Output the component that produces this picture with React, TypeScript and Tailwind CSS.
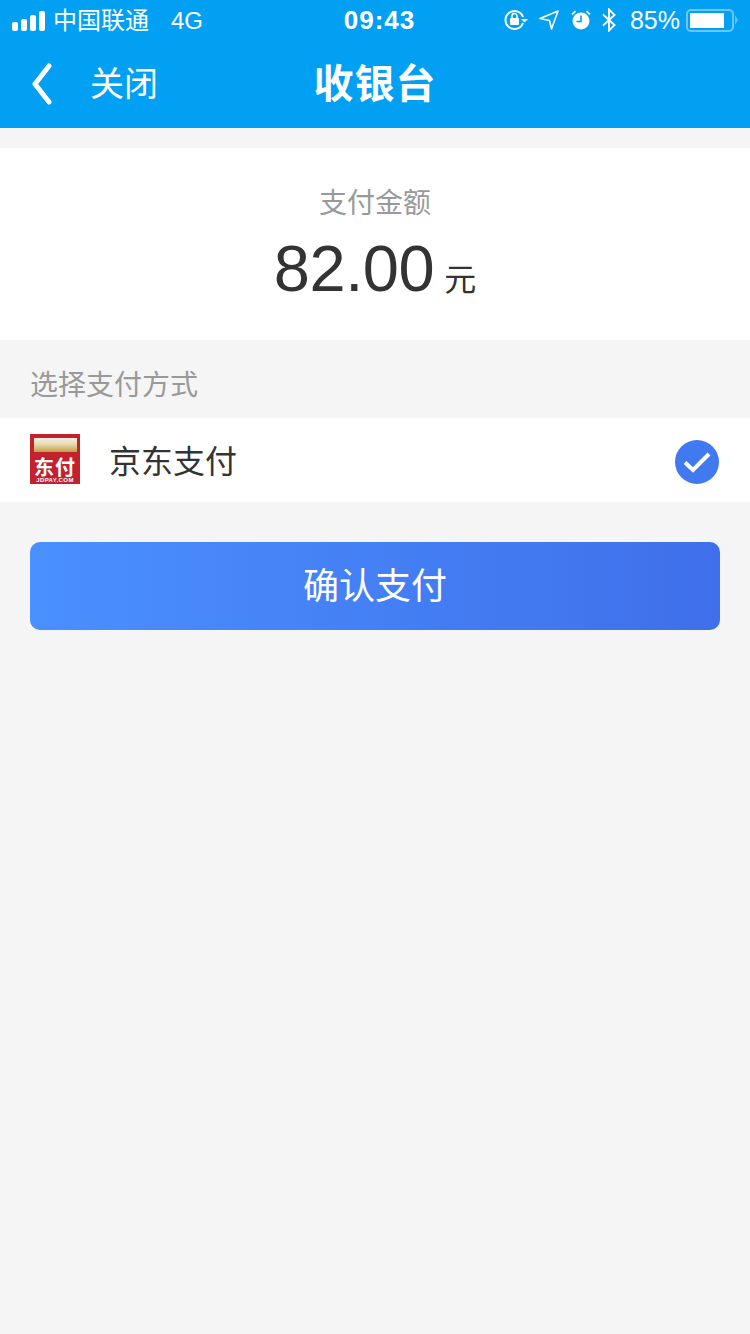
import React from "react";

const cjk = { fontFamily: '"Liberation Sans", "Noto Sans CJK SC", sans-serif' };

function StatusBar() {
  return (
    <div className="flex h-10 items-center justify-between pl-3 pr-[12px] text-white">
      <div className="flex w-[243px] items-center">
        <div className="flex items-end gap-[3px] pt-[1px]">
          <span className="h-[9px] w-[6px] rounded-[2px] bg-white" />
          <span className="h-3 w-[6px] rounded-[2px] bg-white" />
          <span className="h-4 w-[6px] rounded-[2px] bg-white" />
          <span className="h-5 w-[6px] rounded-[2px] bg-white" />
        </div>
        <span className="ml-2 mt-[1px] text-[24px] leading-none">中国联通</span>
        <span className="ml-[22px] mt-[1px] text-[24px] leading-none">4G</span>
      </div>
      <span className="text-[26px] font-bold leading-none tracking-[1px]">09:43</span>
      <div className="flex items-center">
        <svg width="24" height="22" viewBox="0 0 24 22" fill="none">
          <path d="M19 14a9 9 0 1 1 0-6" stroke="white" strokeWidth="2" />
          <path d="M17 10h7l-3.500 3.500z" fill="white" />
          <rect x="6" y="9" width="9" height="7" rx="1" fill="white" />
          <path d="M8 9V7a2.500 2.500 0 0 1 5 0v2" stroke="white" strokeWidth="1.500" />
        </svg>
        <svg className="ml-[11px]" width="20" height="20" viewBox="0 0 20 20" fill="none">
          <path d="M1 8.500 19 1l-6.500 18-2-8.500z" stroke="white" strokeWidth="1.600" strokeLinejoin="round" />
        </svg>
        <svg className="ml-[12px]" width="20" height="20" viewBox="0 0 20 20">
          <circle cx="10" cy="11" r="8.500" fill="white" />
          <path d="M10 5.500V11.500H5.500" stroke="#02a0f3" strokeWidth="1.600" fill="none" />
          <path d="M1 4.500 4.500 1.200M19 4.500 15.500 1.200" stroke="white" strokeWidth="1.800" />
        </svg>
        <svg className="ml-[11px]" width="14" height="24" viewBox="0 0 14 24" fill="none">
          <path d="M1 6.500 12.500 17 7 22.500V1.500l5.500 5.500L1 17.500" stroke="white" strokeWidth="1.900" />
        </svg>
        <span className="ml-[14px] text-[25px] leading-none">85%</span>
        <div className="ml-[6px] flex h-[23px] w-[48px] items-center rounded-[5px] border-2 border-[#6cc4f7] p-[2px]">
          <div className="h-full w-[34px] bg-white" />
        </div>
        <span className="ml-[1px] h-0 w-0 border-y-[5px] border-l-[3px] border-y-transparent border-l-[#6cc4f7]" />
      </div>
    </div>
  );
}

function JdPayLogo() {
  return (
    <div className="flex h-[50px] w-[50px] flex-col items-center bg-[#c4212f] pt-[4px]">
      <div className="h-[14px] w-[43px] bg-[linear-gradient(180deg,#f3efe6_0%,#e8d9b0_45%,#c19f45_100%)]" />
      <span className="mt-[7px] text-[20px] font-bold leading-[18px] tracking-[1px] text-white">东付</span>
      <span className="text-[6px] font-bold leading-[6px] tracking-[0.4px] text-white">JDPAY.COM</span>
    </div>
  );
}

export default function App() {
  return (
    <div className="flex min-h-[1334px] flex-col bg-[#f5f5f5]" style={cjk}>
      <header className="h-[128px] bg-[#02a0f3]">
        <StatusBar />
        <div className="relative flex h-[88px] items-center justify-center text-white">
          <div className="absolute left-[32px] top-[23px] flex items-center">
            <svg width="20" height="42" viewBox="0 0 20 42" fill="none">
              <path d="M17 3 3 21l14 18" stroke="white" strokeWidth="5" strokeLinecap="round" strokeLinejoin="round" />
            </svg>
            <span className="ml-[38px] text-[34px] leading-none">关闭</span>
          </div>
          <h1 className="text-[40px] font-bold leading-none tracking-[1px]">收银台</h1>
        </div>
      </header>

      <section className="mt-5 flex h-[192px] flex-col items-center bg-white pt-[42px]">
        <p className="text-[28px] leading-none text-[#999999]">支付金额</p>
        <p className="mt-[19px] flex items-baseline text-[#333333]">
          <span className="text-[65px] leading-[64px] tracking-[-0.4px]">82.00</span>
          <span className="ml-[10px] text-[32px] leading-none">元</span>
        </p>
      </section>

      <p className="h-[78px] pl-[30px] pt-[32px] text-[28px] leading-none text-[#999999]">选择支付方式</p>

      <div className="flex h-[84px] items-center bg-white pl-[30px] pr-[31px]">
        <div className="mb-[2px]">
          <JdPayLogo />
        </div>
        <span className="ml-[29px] mt-[3px] text-[32px] leading-none text-[#333333]">京东支付</span>
        <svg className="ml-auto mt-[4px]" width="44" height="44" viewBox="0 0 44 44">
          <circle cx="22" cy="22" r="22" fill="#4179f1" />
          <path d="M10 22.500 18 30 34 14" stroke="white" strokeWidth="4" fill="none" />
        </svg>
      </div>

      <button className="mx-[30px] mt-10 h-[88px] rounded-[10px] bg-[linear-gradient(90deg,#4a90ff,#3f6fea)] pt-[1px] text-[36px] text-white">
        确认支付
      </button>
    </div>
  );
}
